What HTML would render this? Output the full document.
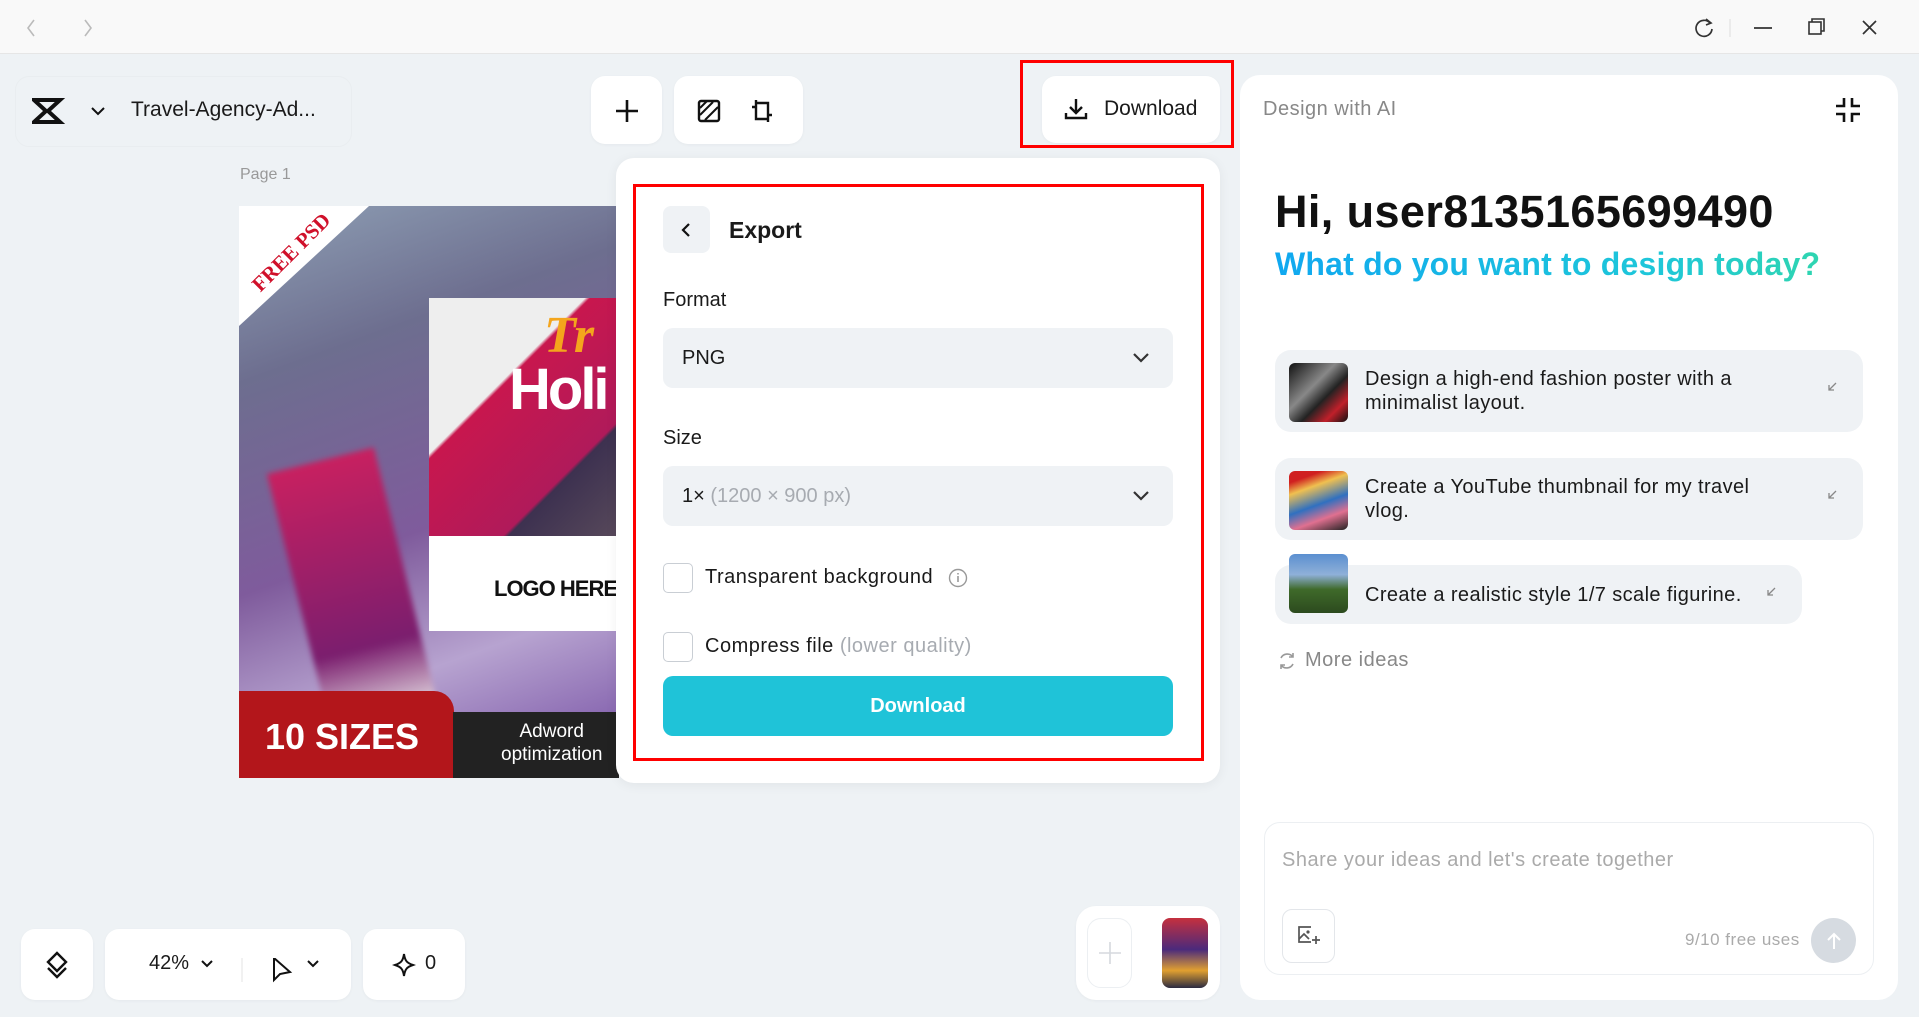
<!DOCTYPE html>
<html><head><meta charset="utf-8"><style>
*{box-sizing:border-box;margin:0;padding:0}
body{width:1919px;height:1017px;overflow:hidden;background:#eef2f5;font-family:"Liberation Sans",sans-serif;color:#1a1a1a;position:relative}
.abs{position:absolute}
.top{left:0;top:0;width:1919px;height:54px;background:#f9f9f9;border-bottom:1px solid #e6e6e6}
.card{background:#fff;border-radius:16px}
.btn{background:#fff;border-radius:14px;box-shadow:0 1px 3px rgba(0,0,0,.04)}
.red{border:3px solid #f00}
.sel{background:#eff2f5;border-radius:10px;font-size:20px;display:flex;align-items:center;padding-left:19px}
.chev{position:absolute;right:22px;top:50%;margin-top:-7px}
.cb{width:30px;height:30px;border:1.5px solid #c9ced4;border-radius:5px;background:#fff}
.prompt{background:#eff2f5;border-radius:16px;font-size:20px;letter-spacing:.4px;line-height:24px;color:#1a1a1a}
.thumb{border-radius:6px}
</style></head><body>
<div class="abs top"></div>
<svg class="abs" style="left:22px;top:17px" width="80" height="22"><path d="M12 3l-6 8 6 8" stroke="#bbb" stroke-width="1.6" fill="none"/><path d="M63 3l6 8-6 8" stroke="#bbb" stroke-width="1.6" fill="none"/></svg>
<svg class="abs" style="left:1688px;top:15px" width="200" height="26">
<path d="M22 8a8 8 0 1 0 2 6" stroke="#333" stroke-width="1.7" fill="none"/><path d="M18 4l5 4-5 2" stroke="#333" stroke-width="1.7" fill="none"/>
<line x1="42" y1="4" x2="42" y2="22" stroke="#ddd"/>
<line x1="66" y1="13" x2="84" y2="13" stroke="#333" stroke-width="1.7"/>
<rect x="121" y="7" width="12" height="12" stroke="#333" stroke-width="1.6" fill="none"/><path d="M124 7V4h12v12h-3" stroke="#333" stroke-width="1.6" fill="none"/>
<path d="M175 6l13 13M188 6l-13 13" stroke="#333" stroke-width="1.7"/></svg>

<div class="abs" style="left:15px;top:76px;width:337px;height:71px;background:#eef2f5;border-radius:14px;border:1px solid #e9edf0"></div>
<svg class="abs" style="left:32px;top:97px" width="80" height="28"><path d="M2 3h26L16 14l12 11H2l12-11z" fill="none" stroke="#111" stroke-width="4"/><path d="M60 11l6 6 6-6" stroke="#111" stroke-width="2" fill="none"/></svg>
<div class="abs" style="left:131px;top:98px;font-size:21px">Travel-Agency-Ad...</div>

<div class="abs btn" style="left:591px;top:76px;width:71px;height:68px"></div>
<svg class="abs" style="left:613px;top:97px" width="28" height="28"><path d="M14 3v22M3 14h22" stroke="#111" stroke-width="2.6"/></svg>
<div class="abs btn" style="left:674px;top:76px;width:129px;height:68px"></div>
<svg class="abs" style="left:696px;top:97px" width="90" height="28"><rect x="3" y="4" width="20" height="20" rx="2" stroke="#111" stroke-width="2.4" fill="none"/><path d="M4 18L17 5M9 23L22 10M4 11l7-7" stroke="#111" stroke-width="2"/><path d="M60 6h12v16H60z M60 6v-3M72 22v3M56 10h4M72 18h4" stroke="#111" stroke-width="2.4" fill="none"/></svg>

<div class="abs btn" style="left:1042px;top:76px;width:178px;height:67px"></div>
<div class="abs red" style="left:1020px;top:60px;width:214px;height:88px"></div>
<svg class="abs" style="left:1063px;top:96px" width="26" height="26"><path d="M13 3v14M7 11l6 6 6-6M3 17v5h20v-5" stroke="#111" stroke-width="2.4" fill="none"/></svg>
<div class="abs" style="left:1104px;top:97px;font-size:21px">Download</div>

<div class="abs" style="left:240px;top:166px;font-size:16px;color:#999">Page 1</div>

<div class="abs" style="left:239px;top:206px;width:380px;height:572px;overflow:hidden;background:linear-gradient(160deg,#8fa0b5 0%,#6d6e8f 25%,#7f5b9c 55%,#b7a3d0 75%,#7048a0 100%)">
 <div class="abs" style="left:0;top:0;width:130px;height:120px;background:#fff;clip-path:polygon(0 0,100% 0,0 100%)"></div>
 <div class="abs" style="left:2px;top:34px;font:bold 21px 'Liberation Serif',serif;color:#d0102a;transform:rotate(-45deg)">FREE PSD</div>
 <div class="abs" style="left:65px;top:250px;width:110px;height:320px;background:linear-gradient(#c82060,#7b1e6e 60%,#eee 85%);transform:rotate(-14deg);filter:blur(3px)"></div>
 <div class="abs" style="left:190px;top:92px;width:190px;height:330px;background:linear-gradient(135deg,#eee 0,#eee 30%,#c8174e 31%,#b01a5a 60%,#3d3150 61%,#5b4c5c 85%);"></div>
 <div class="abs" style="left:190px;top:330px;width:190px;height:95px;background:#fff"></div>
 <div class="abs" style="left:270px;top:150px;font:bold 58px 'Liberation Sans';color:#fff;letter-spacing:-3px">Holi</div>
 <div class="abs" style="left:305px;top:100px;font:bold 52px 'Liberation Serif';color:#f4a51c;font-style:italic">Tr</div>
 <div class="abs" style="left:255px;top:370px;font:bold 22px 'Liberation Sans';color:#111;letter-spacing:-1px">LOGO HERE</div>
 <div class="abs" style="left:0;top:485px;width:215px;height:87px;background:#b3161b;border-top-right-radius:20px"></div>
 <div class="abs" style="left:26px;top:510px;font-size:36px;color:#fff;font-weight:bold">10 SIZES</div>
 <div class="abs" style="left:214px;top:506px;width:170px;height:66px;background:#222"></div>
 <div class="abs" style="left:262px;top:514px;font-size:19px;color:#fff;text-align:center;line-height:23px">Adword<br>optimization</div>
</div>

<div class="abs card" style="left:616px;top:158px;width:604px;height:625px;border-radius:18px;box-shadow:0 2px 12px rgba(0,0,0,.06)"></div>
<div class="abs red" style="left:633px;top:184px;width:571px;height:577px"></div>
<div class="abs" style="left:663px;top:206px;width:47px;height:47px;background:#eff2f5;border-radius:8px"></div>
<svg class="abs" style="left:678px;top:221px" width="16" height="18"><path d="M11 3L5 9l6 6" stroke="#111" stroke-width="2.2" fill="none"/></svg>
<div class="abs" style="left:729px;top:217px;font-size:23px;font-weight:bold">Export</div>
<div class="abs" style="left:663px;top:289px;font-size:20px">Format</div>
<div class="abs sel" style="left:663px;top:328px;width:510px;height:60px">PNG<svg class="chev" width="20" height="14"><path d="M3 3l7 7 7-7" stroke="#333" stroke-width="2.2" fill="none"/></svg></div>
<div class="abs" style="left:663px;top:427px;font-size:20px">Size</div>
<div class="abs sel" style="left:663px;top:466px;width:510px;height:60px">1×&nbsp;<span style="color:#a7abb1">(1200 × 900 px)</span><svg class="chev" width="20" height="14"><path d="M3 3l7 7 7-7" stroke="#333" stroke-width="2.2" fill="none"/></svg></div>
<div class="abs cb" style="left:663px;top:563px"></div>
<div class="abs" style="left:705px;top:566px;font-size:20px;letter-spacing:.5px">Transparent background</div>
<svg class="abs" style="left:948px;top:568px" width="20" height="20"><circle cx="10" cy="10" r="8.5" stroke="#999" stroke-width="1.4" fill="none"/><path d="M10 8v6M10 5v1.5" stroke="#999" stroke-width="1.6"/></svg>
<div class="abs cb" style="left:663px;top:632px"></div>
<div class="abs" style="left:705px;top:635px;font-size:20px;letter-spacing:.5px">Compress file <span style="color:#a7abb1">(lower quality)</span></div>
<div class="abs" style="left:663px;top:676px;width:510px;height:60px;background:#1fc3d8;border-radius:10px;color:#fff;font-size:20px;font-weight:bold;text-align:center;line-height:60px">Download</div>

<div class="abs btn" style="left:21px;top:929px;width:72px;height:71px"></div>
<svg class="abs" style="left:43px;top:951px" width="28" height="28"><path d="M14 2l9 9-9 9-9-9z" stroke="#111" stroke-width="2.4" fill="none"/><path d="M5 17l9 9 9-9" stroke="#111" stroke-width="2.4" fill="none"/></svg>
<div class="abs btn" style="left:105px;top:929px;width:246px;height:71px"></div>
<div class="abs" style="left:149px;top:952px;font-size:20px">42%</div>
<svg class="abs" style="left:200px;top:958px" width="120" height="28"><path d="M2 3l5 5 5-5" stroke="#111" stroke-width="2" fill="none"/><line x1="42" y1="-4" x2="42" y2="24" stroke="#e3e3e3"/><path d="M74 0v22l6-6 10-2z" stroke="#111" stroke-width="2" fill="none"/><path d="M108 3l5 5 5-5" stroke="#111" stroke-width="2" fill="none"/></svg>
<div class="abs btn" style="left:363px;top:929px;width:102px;height:71px"></div>
<svg class="abs" style="left:392px;top:952px" width="24" height="26"><path d="M12 2c1 7 3 9 9 11-6 2-8 4-9 11-1-7-3-9-9-11 6-2 8-4 9-11z" stroke="#111" stroke-width="2" fill="none"/></svg>
<div class="abs" style="left:425px;top:952px;font-size:20px">0</div>
<div class="abs btn" style="left:1076px;top:906px;width:144px;height:94px;border-radius:20px"></div>
<div class="abs" style="left:1087px;top:918px;width:45px;height:70px;border:1px solid #eceff2;border-radius:14px"></div>
<svg class="abs" style="left:1098px;top:941px" width="24" height="24"><path d="M12 1v22M1 12h22" stroke="#d5d9de" stroke-width="1.6"/></svg>
<div class="abs" style="left:1162px;top:918px;width:46px;height:70px;border-radius:8px;background:linear-gradient(#c5303e,#4b2a7c 45%,#e1a030 75%,#2a2a40)"></div>

<div class="abs card" style="left:1240px;top:75px;width:658px;height:925px;border-radius:20px"></div>
<div class="abs" style="left:1263px;top:98px;font-size:20px;color:#888;letter-spacing:.5px">Design with AI</div>
<svg class="abs" style="left:1834px;top:96px" width="28" height="28"><path d="M10 2v8H2M18 2v8h8M10 26v-8H2M18 26v-8h8" stroke="#111" stroke-width="2.6" fill="none"/></svg>
<div class="abs" style="left:1275px;top:186px;font-size:45px;font-weight:bold;color:#111;letter-spacing:.4px">Hi, user8135165699490</div>
<div class="abs" style="left:1275px;top:246px;font-size:32px;font-weight:bold;letter-spacing:.2px;background:linear-gradient(90deg,#10a8f0,#1ec7d9 70%,#2fd5b0);-webkit-background-clip:text;color:transparent">What do you want to design today?</div>

<div class="abs prompt" style="left:1275px;top:350px;width:588px;height:82px"></div>
<div class="abs thumb" style="left:1289px;top:363px;width:59px;height:59px;background:linear-gradient(135deg,#111,#888 40%,#222 60%,#c0202a 80%,#111)"></div>
<div class="abs" style="left:1365px;top:367px;font-size:20px;letter-spacing:.4px;line-height:24px">Design a high-end fashion poster with a<br>minimalist layout.</div>
<div class="abs prompt" style="left:1275px;top:458px;width:588px;height:82px"></div>
<div class="abs thumb" style="left:1289px;top:471px;width:59px;height:59px;background:linear-gradient(160deg,#d02020 0,#d02020 15%,#f0c050 30%,#3070c0 55%,#e07090 75%,#222)"></div>
<div class="abs" style="left:1365px;top:475px;font-size:20px;letter-spacing:.4px;line-height:24px">Create a YouTube thumbnail for my travel<br>vlog.</div>
<div class="abs prompt" style="left:1275px;top:565px;width:527px;height:59px"></div>
<div class="abs thumb" style="left:1289px;top:554px;width:59px;height:59px;background:linear-gradient(#5b8fd0 0,#8fb0d8 35%,#3f6a2a 60%,#2c4a1e)"></div>
<div class="abs" style="left:1365px;top:584px;font-size:20px;letter-spacing:.4px">Create a realistic style 1/7 scale figurine.</div>
<svg class="abs" style="left:1826px;top:381px" width="200" height="200"><path d="M10 2L3 9M3 4v5h5" stroke="#888" stroke-width="1.3" fill="none"/><path d="M10 110L3 117M3 112v5h5" stroke="#888" stroke-width="1.3" fill="none"/></svg>
<svg class="abs" style="left:1765px;top:586px" width="14" height="14"><path d="M10 2L3 9M3 4v5h5" stroke="#888" stroke-width="1.3" fill="none"/></svg>
<svg class="abs" style="left:1277px;top:651px" width="20" height="20"><path d="M16 6a7 7 0 0 0-12 1M4 14a7 7 0 0 0 12-1M16 2v4h-4M4 18v-4h4" stroke="#999" stroke-width="1.6" fill="none"/></svg>
<div class="abs" style="left:1305px;top:649px;font-size:20px;color:#888;letter-spacing:.5px">More ideas</div>

<div class="abs" style="left:1264px;top:822px;width:610px;height:153px;border:1px solid #eceff2;border-radius:16px;background:#fff"></div>
<div class="abs" style="left:1282px;top:849px;font-size:20px;color:#aaa;letter-spacing:.5px">Share your ideas and let's create together</div>
<div class="abs" style="left:1282px;top:909px;width:53px;height:54px;border:1px solid #e3e6ea;border-radius:10px"></div>
<svg class="abs" style="left:1296px;top:924px" width="26" height="24"><path d="M15 3H3v15h12" stroke="#555" stroke-width="1.7" fill="none"/><path d="M3 15l5-5 5 5" stroke="#555" stroke-width="1.7" fill="none"/><circle cx="12" cy="8" r="1.6" fill="#555"/><path d="M20 12v8M16 16h8" stroke="#555" stroke-width="1.7"/></svg>
<div class="abs" style="left:1685px;top:930px;font-size:17px;color:#aaa;letter-spacing:.5px">9/10 free uses</div>
<div class="abs" style="left:1811px;top:918px;width:45px;height:45px;border-radius:50%;background:#d6dbe1"></div>
<svg class="abs" style="left:1823px;top:930px" width="22" height="22"><path d="M11 19V4M5 10l6-6 6 6" stroke="#fff" stroke-width="2" fill="none"/></svg>
</body></html>
